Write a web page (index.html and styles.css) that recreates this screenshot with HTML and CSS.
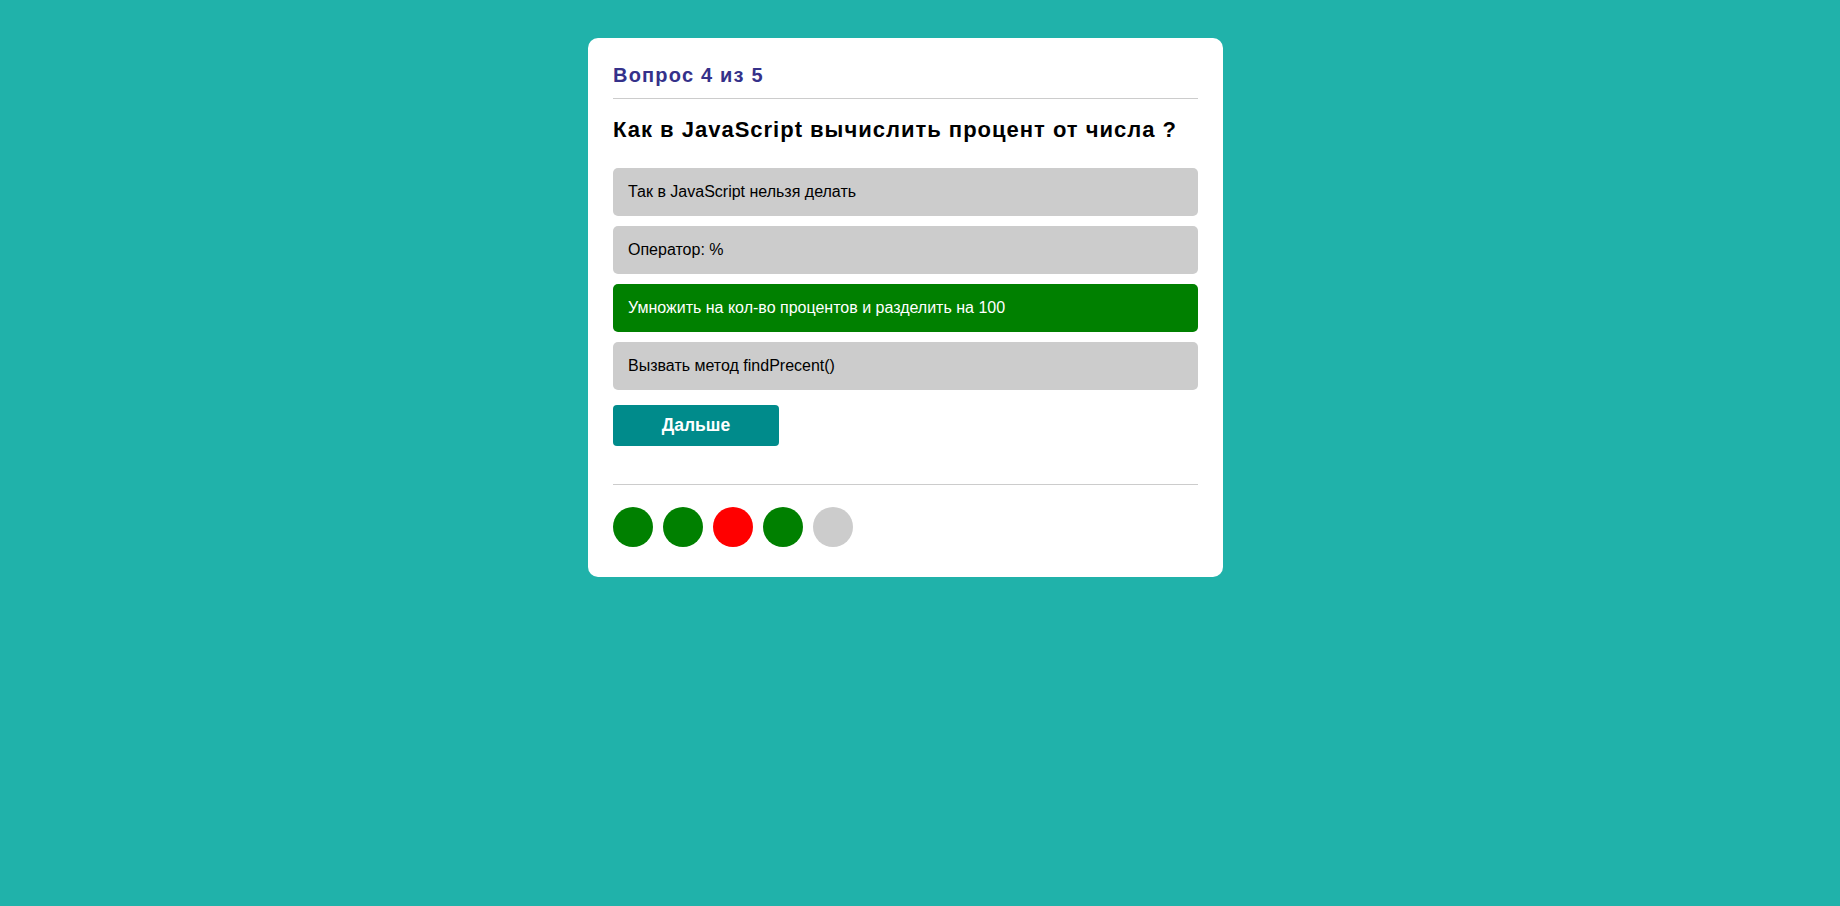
FILE: index.html
```html
<!DOCTYPE html>
<html lang="ru">
<head>
<meta charset="utf-8">
<title>Quiz</title>
<link rel="stylesheet" href="styles.css">
</head>
<body>
<div class="page">
  <div class="card">
    <div class="counter">Вопрос 4 из 5</div>
    <h2 class="question">Как в JavaScript вычислить процент от числа ?</h2>
    <div class="answers">
      <div class="answer">Так в JavaScript нельзя делать</div>
      <div class="answer">Оператор: %</div>
      <div class="answer answer-correct">Умножить на кол-во процентов и разделить на 100</div>
      <div class="answer">Вызвать метод findPrecent()</div>
    </div>
    <button class="next">Дальше</button>
    <div class="progress">
      <span class="dot dot-right"></span>
      <span class="dot dot-right"></span>
      <span class="dot dot-wrong"></span>
      <span class="dot dot-right"></span>
      <span class="dot"></span>
    </div>
  </div>
</div>
</body>
</html>
```
FILE: styles.css
```css
html, body {
  margin: 0;
  padding: 0;
  height: 100%;
}
body {
  background: #20b2aa;
  font-family: "Liberation Sans", Arial, sans-serif;
}
.page {
  padding-top: 38px;
}
.card {
  box-sizing: border-box;
  width: 635px;
  margin-left: 588px;
  background: #fff;
  border-radius: 10px;
  padding: 26px 25px 30px;
}
.counter {
  font-size: 20px;
  font-weight: bold;
  letter-spacing: 1.2px;
  color: #35318a;
  line-height: 23px;
  padding-bottom: 11px;
  border-bottom: 1px solid #cccccc;
}
.question {
  margin: 18px 0 26px;
  font-size: 22px;
  line-height: 25px;
  letter-spacing: 1px;
  font-weight: bold;
  color: #000;
}
.answers {
  display: flex;
  flex-direction: column;
  gap: 10px;
}
.answer {
  background: #cccccc;
  border-radius: 5px;
  padding: 15px;
  font-size: 16px;
  line-height: 18px;
  color: #000;
}
.answer-correct {
  background: #008000;
  color: #fff;
}
.next {
  display: block;
  margin-top: 15px;
  width: 166px;
  height: 41px;
  border: none;
  border-radius: 4px;
  background: #008b8b;
  color: #fff;
  font-family: "Liberation Sans", Arial, sans-serif;
  font-size: 17.5px;
  font-weight: bold;
  padding: 0;
}
.progress {
  margin-top: 38px;
  border-top: 1px solid #cccccc;
  padding-top: 22px;
  display: flex;
  gap: 10px;
}
.dot {
  width: 40px;
  height: 40px;
  border-radius: 50%;
  background: #cccccc;
}
.dot-right {
  background: #008000;
}
.dot-wrong {
  background: #ff0000;
}
```
